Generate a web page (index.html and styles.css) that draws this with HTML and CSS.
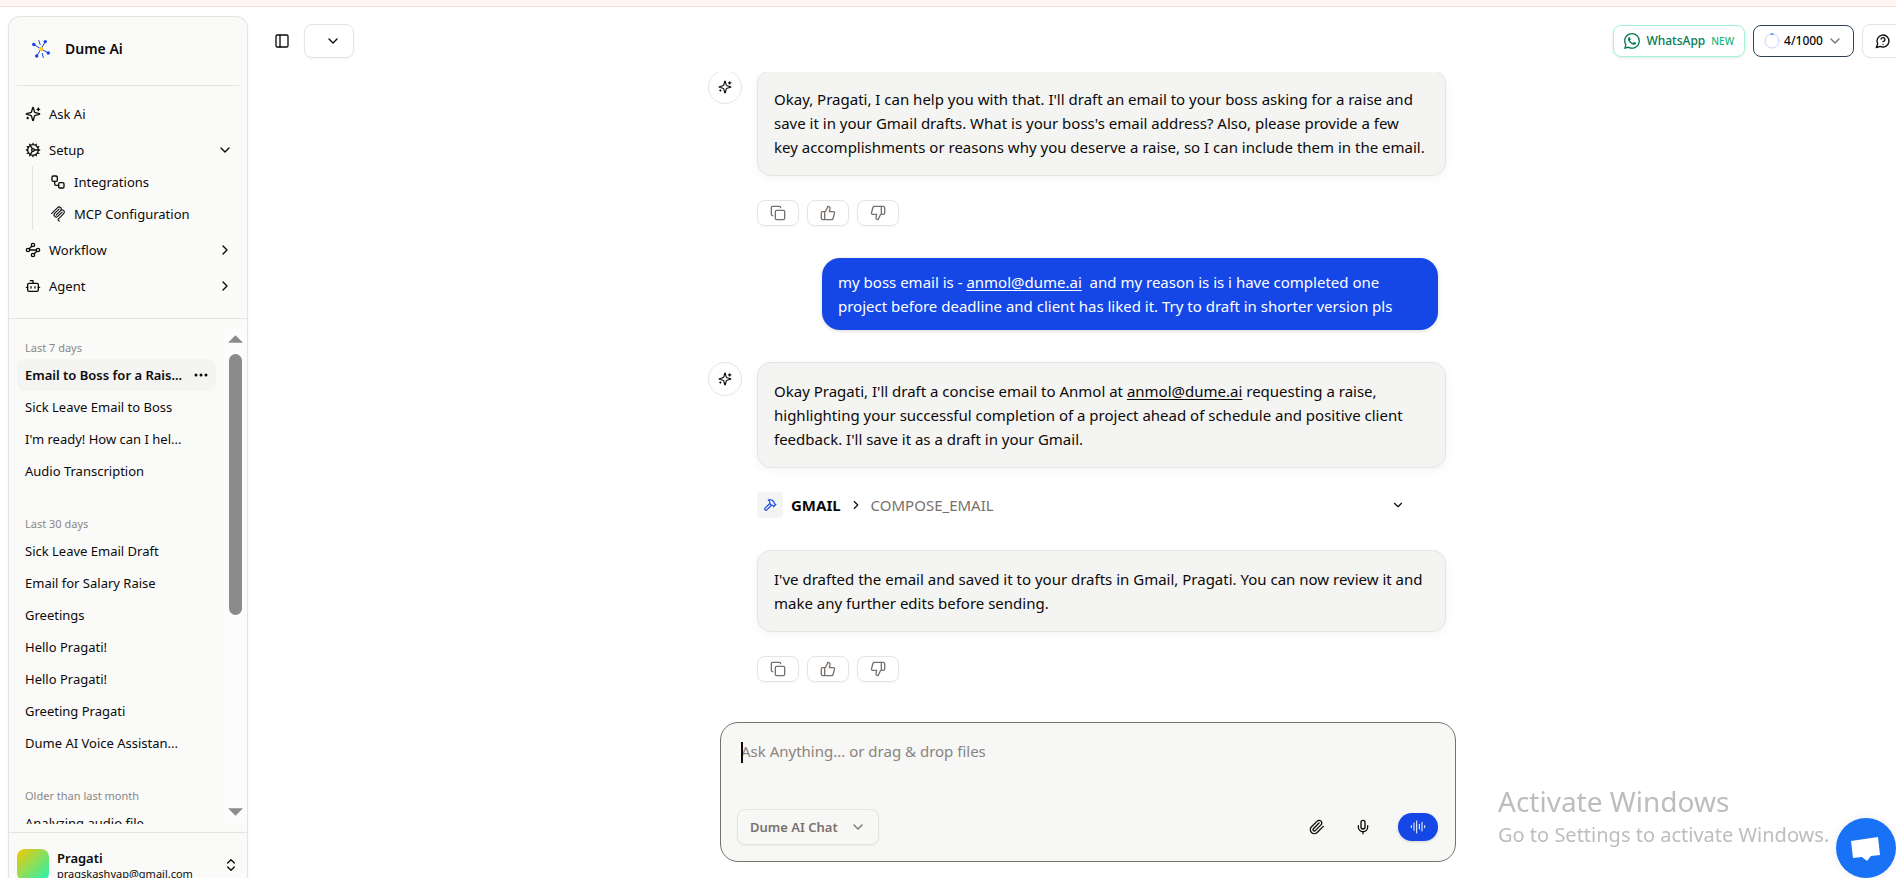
FILE: index.html
```html
<!DOCTYPE html>
<html lang="en">
<head>
<meta charset="utf-8">
<title>Dume Ai</title>
<link rel="stylesheet" href="styles.css">
</head>
<body>
<svg class="sprite" aria-hidden="true">
  <symbol id="sparkles" viewBox="0 0 24 24"><path d="M9.937 15.5A2 2 0 0 0 8.5 14.063l-6.135-1.582a.5.5 0 0 1 0-.962L8.5 9.936A2 2 0 0 0 9.937 8.5l1.582-6.135a.5.5 0 0 1 .963 0L14.063 8.5A2 2 0 0 0 15.5 9.937l6.135 1.581a.5.5 0 0 1 0 .964L15.5 14.063a2 2 0 0 0-1.437 1.437l-1.582 6.135a.5.5 0 0 1-.963 0zM20 3v4M22 5h-4M4 17v2M5 18H3"/></symbol>
  <symbol id="cog" viewBox="0 0 24 24"><path d="M12 20a8 8 0 1 0 0-16 8 8 0 0 0 0 16ZM12 14a2 2 0 1 0 0-4 2 2 0 0 0 0 4ZM12 2v2M12 22v-2M17 20.66l-1-1.73M11 10.27 7 3.34M20.66 17l-1.73-1M3.34 7l1.73 1M14 12h8M2 12h2M20.66 7l-1.73 1M3.34 17l1.73-1M17 3.34l-1 1.73M11 13.73l-4 6.93"/></symbol>
  <symbol id="blocks" viewBox="0 0 24 24"><rect x="3" y="3" width="8" height="8" rx="2"/><path d="M7 11v4a2 2 0 0 0 2 2h4"/><rect x="13" y="13" width="8" height="8" rx="2"/></symbol>
  <symbol id="mcp" viewBox="0 0 180 180"><path stroke-width="12" d="M18 84.853 85.882 16.971c9.373-9.373 24.569-9.373 33.941 0 9.373 9.372 9.373 24.568 0 33.941L68.558 102.177M69.265 101.47l50.558-50.558c9.373-9.373 24.569-9.373 33.942 0l.353.353c9.373 9.373 9.373 24.569 0 33.941L92.725 146.6c-3.124 3.124-3.124 8.189 0 11.313l12.606 12.607M102.853 33.941 52.648 84.146c-9.372 9.372-9.372 24.568 0 33.941 9.373 9.372 24.569 9.372 33.941 0l50.205-50.205"/></symbol>
  <symbol id="waypoints" viewBox="0 0 24 24"><circle cx="12" cy="4.5" r="2.5"/><circle cx="4.5" cy="12" r="2.5"/><circle cx="19.5" cy="12" r="2.5"/><circle cx="12" cy="19.5" r="2.5"/><path d="m10.2 6.3-3.9 3.9M7 12h10M13.8 17.7l3.9-3.9"/></symbol>
  <symbol id="bot" viewBox="0 0 24 24"><path d="M12 8V4H8M2 14h2M20 14h2M15 13v2M9 13v2"/><rect x="4" y="8" width="16" height="12" rx="2"/></symbol>
  <symbol id="down" viewBox="0 0 24 24"><path d="m6 9 6 6 6-6"/></symbol>
  <symbol id="right" viewBox="0 0 24 24"><path d="m9 18 6-6-6-6"/></symbol>
  <symbol id="updown" viewBox="0 0 24 24"><path d="m7 15 5 5 5-5M7 9l5-5 5 5"/></symbol>
  <symbol id="panel" viewBox="0 0 24 24"><rect x="3" y="3" width="18" height="18" rx="2"/><path d="M9 3v18"/></symbol>
  <symbol id="help" viewBox="0 0 24 24"><path d="M7.9 20A9 9 0 1 0 4 16.1L2 22ZM9.09 9a3 3 0 0 1 5.83 1c0 2-3 3-3 3M12 17h.01"/></symbol>
  <symbol id="copy" viewBox="0 0 24 24"><rect x="8" y="8" width="14" height="14" rx="2"/><path d="M4 16c-1.1 0-2-.9-2-2V4c0-1.1.9-2 2-2h10c1.1 0 2 .9 2 2"/></symbol>
  <symbol id="up-thumb" viewBox="0 0 24 24"><path d="M7 10v12M15 5.88 14 10h5.83a2 2 0 0 1 1.92 2.56l-2.33 8A2 2 0 0 1 17.5 22H4a2 2 0 0 1-2-2v-8a2 2 0 0 1 2-2h2.76a2 2 0 0 0 1.79-1.11L12 2a3.13 3.13 0 0 1 3 3.88Z"/></symbol>
  <symbol id="down-thumb" viewBox="0 0 24 24"><path d="M17 14V2M9 18.12 10 14H4.17a2 2 0 0 1-1.92-2.56l2.33-8A2 2 0 0 1 6.5 2H20a2 2 0 0 1 2 2v8a2 2 0 0 1-2 2h-2.76a2 2 0 0 0-1.79 1.11L12 22a3.13 3.13 0 0 1-3-3.88Z"/></symbol>
  <symbol id="hammer" viewBox="0 0 24 24"><path d="m15 12-8.373 8.373a1 1 0 1 1-3-3L12 9M18 15l4-4M21.5 11.5l-1.914-1.914A2 2 0 0 1 19 8.172V7l-2.26-2.26a6 6 0 0 0-4.202-1.756L9 2.96l.92.82A6.18 6.18 0 0 1 12 8.4V10l2 2h1.172a2 2 0 0 1 1.414.586L18.5 14.5"/></symbol>
  <symbol id="clip" viewBox="0 0 24 24"><path d="m21.44 11.05-9.19 9.19a6 6 0 0 1-8.49-8.49l8.57-8.57A4 4 0 1 1 18 8.84l-8.59 8.57a2 2 0 0 1-2.83-2.83l8.49-8.48"/></symbol>
  <symbol id="mic" viewBox="0 0 24 24"><path d="M12 2a3 3 0 0 0-3 3v7a3 3 0 0 0 6 0V5a3 3 0 0 0-3-3ZM19 10v2a7 7 0 0 1-14 0v-2M12 19v3"/></symbol>
  <symbol id="voice" viewBox="0 0 24 24"><path d="M2 10v3M6 6v11M10 3v18M14 8v7M18 5v13M22 10v3"/></symbol>
</svg>

<div class="strip"></div>
<div class="shell">
  <aside class="sidebar">
    <div class="brand">
      <svg class="logo" viewBox="0 0 20 20" aria-hidden="true">
        <path stroke="#1447e6" d="M10 10 3 5.500M10 10 14.500 2.500M10 10 17.500 14M10 10 5.500 17.500M7.800 1.500 9.200 5.500M12.300 18.500 11.300 14.500"/>
        <g fill="#1447e6" stroke="none"><circle cx="2.800" cy="5.500" r="1.700"/><circle cx="14.300" cy="2.600" r="1.700"/><circle cx="17.300" cy="14" r="1.700"/><circle cx="5.700" cy="17" r="1.700"/></g>
        <circle cx="10" cy="10" r="2.300" fill="#fdc72f" stroke="none"/>
      </svg>
      <span>Dume Ai</span>
    </div>
    <nav class="nav">
      <a class="nav-row" href="#"><svg class="i16"><use href="#sparkles"/></svg><span>Ask Ai</span></a>
      <div>
        <button class="nav-row"><svg class="i16"><use href="#cog"/></svg><span>Setup</span><svg class="i16"><use href="#down"/></svg></button>
        <div class="subnav">
          <a class="nav-row" href="#"><svg class="i16"><use href="#blocks"/></svg><span>Integrations</span></a>
          <a class="nav-row" href="#"><svg class="i16"><use href="#mcp"/></svg><span>MCP Configuration</span></a>
        </div>
      </div>
      <button class="nav-row"><svg class="i16"><use href="#waypoints"/></svg><span>Workflow</span><svg class="i16"><use href="#right"/></svg></button>
      <button class="nav-row"><svg class="i16"><use href="#bot"/></svg><span>Agent</span><svg class="i16"><use href="#right"/></svg></button>
    </nav>
    <div class="history">
      <div class="history-list">
        <section>
          <h2>Last 7 days</h2>
          <div class="chat-row active"><a href="#">Email to Boss for a Rais...</a><button aria-label="More"><svg class="dots" viewBox="0 0 14 4"><circle cx="2" cy="2" r="1.500"/><circle cx="7" cy="2" r="1.500"/><circle cx="12" cy="2" r="1.500"/></svg></button></div>
          <div class="chat-row"><a href="#">Sick Leave Email to Boss</a></div>
          <div class="chat-row"><a href="#">I'm ready! How can I hel...</a></div>
          <div class="chat-row"><a href="#">Audio Transcription</a></div>
        </section>
        <section>
          <h2>Last 30 days</h2>
          <div class="chat-row"><a href="#">Sick Leave Email Draft</a></div>
          <div class="chat-row"><a href="#">Email for Salary Raise</a></div>
          <div class="chat-row"><a href="#">Greetings</a></div>
          <div class="chat-row"><a href="#">Hello Pragati!</a></div>
          <div class="chat-row"><a href="#">Hello Pragati!</a></div>
          <div class="chat-row"><a href="#">Greeting Pragati</a></div>
          <div class="chat-row"><a href="#">Dume AI Voice Assistan...</a></div>
        </section>
        <section>
          <h2>Older than last month</h2>
          <div class="chat-row"><a href="#">Analyzing audio file</a></div>
        </section>
      </div>
      <div class="scrollbar" aria-hidden="true">
        <svg viewBox="0 0 16 8"><path d="M0 8 8 0l8 8z"/></svg>
        <div class="track"><div class="thumb"></div></div>
        <svg viewBox="0 0 16 8"><path d="M0 0h16L8 8z"/></svg>
      </div>
    </div>
    <button class="account">
      <span class="avatar"></span>
      <span class="who"><strong>Pragati</strong><small>pragskashyap@gmail.com</small></span>
      <svg class="i16"><use href="#updown"/></svg>
    </button>
  </aside>

  <main class="main">
    <header class="topbar">
      <button class="panel-btn" aria-label="Toggle sidebar"><svg class="i16"><use href="#panel"/></svg></button>
      <div class="picker small"><select aria-label="Model"><option></option></select><svg class="i16"><use href="#down"/></svg></div>
      <div class="tools">
        <a class="pill whatsapp" href="#">
          <svg class="i16" viewBox="0 0 16 16"><path d="M13.601 2.326A7.854 7.854 0 0 0 7.994 0C3.627 0 .068 3.558.064 7.926c0 1.399.366 2.760 1.057 3.965L0 16l4.204-1.102a7.933 7.933 0 0 0 3.790.965h.004c4.368 0 7.926-3.558 7.930-7.930A7.898 7.898 0 0 0 13.600 2.326zM7.994 14.521a6.573 6.573 0 0 1-3.356-.920l-.240-.144-2.494.654.666-2.433-.156-.251a6.560 6.560 0 0 1-1.007-3.505c0-3.626 2.957-6.584 6.591-6.584a6.560 6.560 0 0 1 4.660 1.931 6.557 6.557 0 0 1 1.928 4.660c-.004 3.639-2.961 6.592-6.592 6.592zm3.615-4.934c-.197-.099-1.170-.578-1.353-.646-.182-.065-.315-.099-.445.099-.133.197-.513.646-.627.775-.114.133-.232.148-.430.050-.197-.100-.836-.308-1.592-.985-.590-.525-.985-1.175-1.103-1.372-.114-.198-.011-.304.088-.403.087-.088.197-.232.296-.346.100-.114.133-.198.198-.330.065-.134.034-.248-.015-.347-.050-.099-.445-1.076-.612-1.470-.160-.389-.323-.335-.445-.340-.114-.007-.247-.007-.380-.007a.729.729 0 0 0-.529.247c-.182.198-.691.677-.691 1.654 0 .977.710 1.916.810 2.049.098.133 1.394 2.132 3.383 2.992.470.205.840.326 1.129.418.475.152.904.129 1.246.080.380-.058 1.171-.480 1.338-.943.164-.464.164-.860.114-.943-.049-.084-.182-.133-.380-.232z"/></svg>
          <span>WhatsApp</span><em>NEW</em>
        </a>
        <button class="pill usage">
          <svg class="ring" viewBox="0 0 16 16"><circle cx="8" cy="8" r="7" stroke="#c9d4fa"/><path d="M7 1h2" stroke="#1447e6"/></svg>
          <span>4/1000</span>
          <svg class="i16"><use href="#down"/></svg>
        </button>
        <button class="help" aria-label="Help"><svg class="i16"><use href="#help"/></svg></button>
      </div>
    </header>

    <div class="thread">
      <div class="thread-inner">
        <article class="msg">
          <span class="bot"><svg class="i14"><use href="#sparkles"/></svg></span>
          <div class="msg-body">
            <p class="bubble">Okay, Pragati, I can help you with that. I'll draft an email to your boss asking for a raise and<br>save it in your Gmail drafts. What is your boss's email address? Also, please provide a few<br>key accomplishments or reasons why you deserve a raise, so I can include them in the email.</p>
            <div class="actions">
              <button aria-label="Copy"><svg class="i16"><use href="#copy"/></svg></button>
              <button aria-label="Like"><svg class="i16"><use href="#up-thumb"/></svg></button>
              <button aria-label="Dislike"><svg class="i16"><use href="#down-thumb"/></svg></button>
            </div>
          </div>
        </article>
        <p class="user-bubble">my boss email is - <a href="#">anmol@dume.ai</a>&nbsp; and my reason is is i have completed one<br>project before deadline and client has liked it. Try to draft in shorter version pls</p>
        <article class="msg">
          <span class="bot"><svg class="i14"><use href="#sparkles"/></svg></span>
          <div class="msg-body">
            <p class="bubble">Okay Pragati, I'll draft a concise email to Anmol at <a href="#">anmol@dume.ai</a> requesting a raise,<br>highlighting your successful completion of a project ahead of schedule and positive client<br>feedback. I'll save it as a draft in your Gmail.</p>
            <button class="call">
              <span class="call-icon"><svg class="i14"><use href="#hammer"/></svg></span>
              <strong>GMAIL</strong><svg class="i14"><use href="#right"/></svg><span class="call-name">COMPOSE_EMAIL</span>
              <svg class="i14"><use href="#down"/></svg>
            </button>
            <p class="bubble second">I've drafted the email and saved it to your drafts in Gmail, Pragati. You can now review it and<br>make any further edits before sending.</p>
            <div class="actions">
              <button aria-label="Copy"><svg class="i16"><use href="#copy"/></svg></button>
              <button aria-label="Like"><svg class="i16"><use href="#up-thumb"/></svg></button>
              <button aria-label="Dislike"><svg class="i16"><use href="#down-thumb"/></svg></button>
            </div>
          </div>
        </article>
      </div>
    </div>

    <form class="composer">
      <div class="entry"><span class="caret" aria-hidden="true"></span><textarea aria-label="Message" placeholder="Ask Anything... or drag &amp; drop files"></textarea></div>
      <div class="composer-bar">
        <div class="picker"><select aria-label="Mode"><option>Dume AI Chat</option></select><svg class="i16"><use href="#down"/></svg></div>
        <button type="button" class="ghost" aria-label="Attach"><svg class="i16"><use href="#clip"/></svg></button>
        <button type="button" class="ghost" aria-label="Dictate"><svg class="i16"><use href="#mic"/></svg></button>
        <button type="button" class="voice" aria-label="Voice mode"><svg class="i16"><use href="#voice"/></svg></button>
      </div>
    </form>
  </main>
</div>

<button class="chat-launcher" aria-label="Open chat"><svg viewBox="0 0 60 60"><path d="M15 23 42 19l2 18-9 1-4 5-5-4-9 1z"/></svg></button>
<div class="watermark"><p>Activate Windows</p><p>Go to Settings to activate Windows.</p></div>
</body>
</html>
```
FILE: styles.css
```css
* { box-sizing: border-box; margin: 0; }
body { font-family: "Noto Sans", sans-serif; font-size: 13px; line-height: 20px; color: #0c0a09; background: #fff; height: 100vh; overflow: hidden; }
button, select, textarea { font: inherit; color: inherit; background: none; border: 0; padding: 0; }
a { color: inherit; text-decoration: none; }
svg { flex: none; fill: none; stroke: currentColor; stroke-width: 2; stroke-linecap: round; stroke-linejoin: round; }
.sprite { position: absolute; width: 0; height: 0; }
.i16 { width: 16px; height: 16px; }
.i14 { width: 14px; height: 14px; }

.strip { height: 7px; background: #fff5f2; border-bottom: 1px solid #fbe0d2; }
.shell { display: flex; height: calc(100vh + 21px); width: calc(100vw + 24px); padding: 9px 0 8px 8px; gap: 8px; }

.sidebar { width: 240px; flex: none; display: flex; flex-direction: column; background: #fafaf9; border: 1px solid #e5e4e3; border-radius: 12px; box-shadow: 0 1px 3px rgba(0, 0, 0, .06); }
.brand { display: flex; align-items: center; gap: 14px; height: 69px; margin: 0 8px; padding: 0 14px 4px; border-bottom: 1px solid #e5e4e3; font-size: 14px; font-weight: 600; }
.logo { width: 20px; height: 20px; stroke-width: 1; }
.nav { display: flex; flex-direction: column; gap: 4px; padding: 12px 8px 16px; border-bottom: 1px solid #e5e4e3; }
.nav-row { display: flex; align-items: center; gap: 8px; width: 100%; height: 32px; padding: 0 6px 0 8px; text-align: left; }
.nav-row span { flex: 1; }
.subnav { margin-left: 15px; padding-left: 9px; border-left: 1px solid #e5e4e3; }

.history { flex: 1; min-height: 0; display: flex; margin: 8px 0; }
.history-list { flex: 1; min-width: 0; overflow: hidden; padding: 8px 8px 0 8px; display: flex; flex-direction: column; gap: 24px; }
.history section { flex: none; }
.history h2 { height: 24px; padding: 0 8px; line-height: 26px; font-size: 11px; font-weight: 400; color: #8b8785; }
.chat-row { display: flex; align-items: center; justify-content: space-between; height: 32px; padding: 0 8px; border-radius: 8px; white-space: nowrap; }
.chat-row.active { background: #f4f4f3; font-weight: 600; }
.dots { width: 14px; height: 4px; fill: currentColor; stroke: none; display: block; }
.scrollbar { width: 23px; flex: none; background: #fcfcfc; display: flex; flex-direction: column; align-items: center; padding: 8px 0; }
.scrollbar svg { width: 15px; height: 8px; fill: #8b8b8b; stroke: none; }
.track { flex: 1; width: 13px; padding: 11px 0; }
.thumb { height: 59%; border-radius: 7px; background: #8b8b8b; }

.account { display: flex; align-items: center; gap: 8px; padding: 16px 8px; border-top: 1px solid #e5e4e3; text-align: left; }
.avatar { width: 32px; height: 32px; border-radius: 8px; background: linear-gradient(135deg, #f5c800, #1ff5b8); }
.who { flex: 1; display: flex; flex-direction: column; }
.who strong { font-weight: 600; line-height: 18px; }
.who small { font-size: 11px; line-height: 14px; }

.main { flex: 1; min-width: 0; height: calc(100vh - 16px); display: flex; flex-direction: column; padding-bottom: 16px; }
.topbar { display: flex; align-items: center; height: 50px; margin-bottom: 6px; padding: 0 16px 0 18px; }
.panel-btn { display: flex; margin-right: 14px; }
.picker { position: relative; display: flex; align-items: center; width: 142px; height: 36px; border: 1px solid #e5e4e3; border-radius: 8px; box-shadow: 0 1px 2px rgba(0, 0, 0, .05); }
.picker select { appearance: none; width: 100%; height: 100%; padding: 0 12px; }
.picker svg { position: absolute; right: 12px; pointer-events: none; }
.picker.small { width: 50px; height: 34px; }
.tools { display: flex; align-items: center; gap: 8px; margin-left: auto; }
.pill { display: flex; align-items: center; gap: 6px; height: 32px; padding: 0 10px; border: 1px solid; border-radius: 8px; font-weight: 500; font-size: 12px; }
.whatsapp { color: #057a55; border-color: #a4f4cf; box-shadow: 0 1px 3px rgba(0, 0, 0, .1); }
.whatsapp svg { fill: currentColor; stroke: none; }
.whatsapp em { font-style: normal; font-size: 10px; color: #12b981; }
.usage { border-color: #314158; gap: 4px; color: #0c0a09; }
.usage .i16 { color: #79716b; }
.ring { width: 16px; height: 16px; stroke-width: 1; }
.help { display: flex; align-items: center; padding: 0 12px; height: 34px; border: 1px solid #e5e4e3; border-radius: 8px; }

.thread { flex: 1; min-height: 0; overflow: hidden; display: flex; flex-direction: column; justify-content: flex-end; padding-bottom: 40px; font-size: 15px; line-height: 24px; }
.thread-inner { width: 100%; max-width: 760px; margin: 0 auto; padding-right: 22px; display: flex; flex-direction: column; gap: 32px; }
.msg { display: flex; gap: 15px; }
.bot { flex: none; width: 34px; height: 34px; display: flex; align-items: center; justify-content: center; border: 1px solid #e5e4e3; border-radius: 50%; }
.msg-body { flex: 1; min-width: 0; display: flex; flex-direction: column; gap: 24px; }
.bubble { padding: 16px; background: #f4f4f3; border: 1px solid #e5e4e3; border-radius: 14px; box-shadow: 0 2px 10px rgba(0, 0, 0, .05); white-space: nowrap; }
.bubble a, .user-bubble a { text-decoration: underline; text-underline-offset: 2px; }
.bubble.second { margin-top: 8px; }
.user-bubble { align-self: flex-end; width: 616px; margin-right: 8px; padding: 12px 16px; border-radius: 18px; background: #1447e6; color: #fff; box-shadow: 0 1px 4px rgba(0, 0, 0, .15); white-space: nowrap; }
.actions { display: flex; gap: 8px; }
.actions button { width: 42px; height: 26px; display: flex; align-items: center; justify-content: center; border: 1px solid #e5e4e3; border-radius: 8px; color: #79716b; box-shadow: 0 1px 2px rgba(0, 0, 0, .05); }
.actions svg { stroke-width: 2; }
.call { display: flex; align-items: center; gap: 8px; height: 26px; padding-right: 41px; text-align: left; }
.call-icon { width: 26px; height: 26px; display: flex; align-items: center; justify-content: center; background: #f4f4f3; border-radius: 4px; color: #1447e6; }
.call-name { flex: 1; color: #79716b; }

.composer { width: 736px; max-width: 100%; height: 140px; margin: 0 auto; display: flex; flex-direction: column; padding: 16px 17px 16px 16px; background: #f7f7f6; border: 1px solid #79716b; border-radius: 18px; }
.entry { position: relative; flex: 1; display: flex; }
.entry textarea { flex: 1; resize: none; outline: 0; padding: 0 4px; font-size: 15px; line-height: 24px; }
.entry textarea::placeholder { color: #8a837e; }
.caret { position: absolute; left: 4px; top: 3px; width: 2px; height: 21px; background: #0c0a09; }
.composer-bar { display: flex; align-items: center; }
.composer-bar .picker { margin-right: auto; font-weight: 600; color: #79716b; }
.ghost { width: 46px; height: 28px; display: flex; align-items: center; justify-content: center; }
.voice { width: 40px; height: 28px; margin-left: 12px; display: flex; align-items: center; justify-content: center; border-radius: 14px; background: #1447e6; color: #fff; box-shadow: 0 1px 3px rgba(0, 0, 0, .15); }
.voice svg { stroke-width: 1.5; }

.chat-launcher { position: fixed; right: 0; bottom: 0; width: 60px; height: 60px; border-radius: 50%; background: #1972f5; box-shadow: 0 0 10px rgba(0, 0, 0, .08); }
.chat-launcher svg { display: block; fill: #fff; stroke: none; }
.watermark { position: fixed; right: 58px; bottom: 28px; width: 340px; color: #bdbdbd; font-size: 20px; line-height: 30px; white-space: nowrap; pointer-events: none; }
.watermark p:first-child { font-size: 28px; line-height: 38px; }
```
